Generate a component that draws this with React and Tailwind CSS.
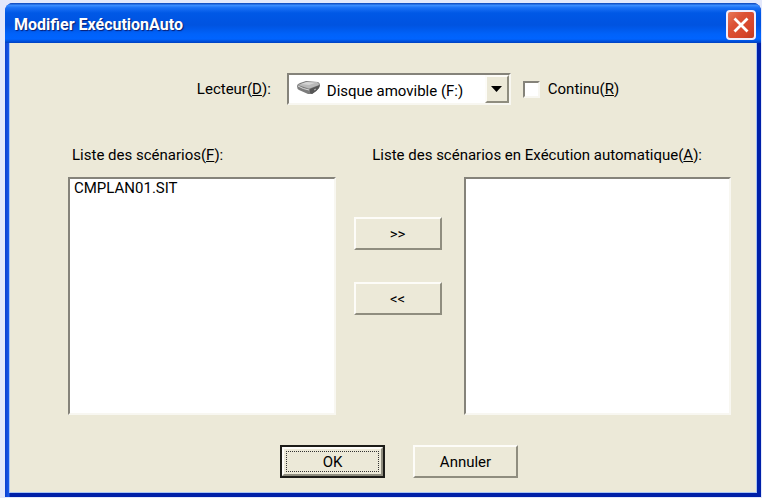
import React from 'react';

const RAISED = "border-2 border-t-[#fdfcf8] border-l-[#fdfcf8] border-r-[#8f8d7f] border-b-[#8f8d7f] bg-[#ece9d8]";
const SUNKEN = "border-2 border-t-[#85837a] border-l-[#85837a] border-r-[#f8f7f1] border-b-[#f8f7f1] bg-white";

const DiskIcon = () => (
  <svg className="absolute left-2 top-1.5 w-6 h-4 pointer-events-none" viewBox="0 0 24 16">
    <path d="M0 5 Q0 3 3 2 L9 0 L21 1 Q23 2 23 4 L22 7 Q20 10 15 13 L11 13 L2 9 Q0 8 0 5 Z" fill="#7c7c7c" />
    <path d="M1 4 L9 1 L20 1 Q22 2 22 4 L14 7 Q12 8 10 7 Z" fill="#b9b9b9" />
    <path d="M4 3 L10 1 L18 2 L12 4 Z" fill="#d4d4d4" />
    <path d="M13 8 L23 4 L22 7 Q20 10 15 13 L13 12 Z" fill="#565656" />
    <path d="M1 5 Q6 8 12 9" stroke="#dadada" strokeWidth="1" fill="none" />
    <path d="M17 9 L19 8" stroke="#b8b8b8" strokeWidth="1" />
  </svg>
);

const TitleBar = () => (
  <div className="h-10 flex items-center justify-between pl-[9px] pr-[5px] bg-[linear-gradient(to_bottom,#0842b8_0%,#3a8cff_6%,#1a70f5_12%,#0058e6_25%,#0053e0_55%,#0062fa_78%,#0064ff_90%,#0040c0_100%)]">
    <h1 className="pt-1 text-white text-base font-bold font-['Roboto',sans-serif] [text-shadow:1px_1px_1px_#0a1e70]">
      Modifier ExécutionAuto
    </h1>
    <button
      type="button"
      aria-label="Fermer"
      className="w-[30px] h-[30px] mt-1 flex items-center justify-center rounded border-2 border-[#f2eefb] bg-[linear-gradient(135deg,#e8795a_0%,#dc5236_35%,#d6442a_75%,#c03c20_100%)]"
    >
      <svg className="w-4 h-4" viewBox="0 0 16 16">
        <path d="M1.5 1.5 L14.5 14.5 M14.5 1.5 L1.5 14.5" stroke="#fff" strokeWidth="2.8" />
      </svg>
    </button>
  </div>
);

const App = () => {
  return (
    <div className="min-h-screen flex flex-col pt-[3px] pl-[5px] pr-px pb-px bg-[#e3e8fb] text-black text-[15px] leading-5 font-['Roboto',sans-serif]">
      <div className="flex-1 flex flex-col rounded-t-lg overflow-hidden bg-[#0831d9] bg-[linear-gradient(to_right,#0a3fd0,#1a5ae8_4px,#0020a8_5px)]">
        <TitleBar />
        <form className="flex-1 flex flex-col ml-1 mr-1 mb-1 border border-t-0 border-[#a8c4f5] bg-[#ece9d8]">
          <div className="flex items-center justify-center pl-[50px] pt-[30px]">
            <label htmlFor="drive" className="mr-4">Lecteur(<u>D</u>):</label>
            <div className={`relative w-56 h-8 ${SUNKEN}`}>
              <DiskIcon />
              <select id="drive" className="w-full h-full appearance-none bg-transparent pl-[38px] pt-1 outline-none">
                <option>Disque amovible (F:)</option>
              </select>
              <span className={`absolute right-0 inset-y-0 w-6 flex items-center justify-center pointer-events-none ${RAISED}`}>
                <svg className="w-[11px] h-[6px]" viewBox="0 0 11 6">
                  <path d="M0 0 H11 L5.5 6 Z" fill="#000" />
                </svg>
              </span>
            </div>
            <label className="flex items-center gap-2 ml-3">
              <input type="checkbox" className={`appearance-none w-[17px] h-[17px] ${SUNKEN}`} />
              <span>Continu(<u>R</u>)</span>
            </label>
          </div>

          <div className="flex justify-between pl-[62px] pr-[54px] pt-10">
            <label htmlFor="scenarios">Liste des scénarios(<u>F</u>):</label>
            <label htmlFor="autorun">Liste des scénarios en Exécution automatique(<u>A</u>):</label>
          </div>

          <div className="grid grid-cols-[1fr_92px_1fr] gap-x-[18px] pl-[58px] pr-[25px] pt-3">
            <select id="scenarios" size={12} className={`h-[238px] appearance-none outline-none overflow-hidden ${SUNKEN}`}>
              <option className="px-1 py-0">CMPLAN01.SIT</option>
            </select>
            <div className="flex flex-col gap-8 pt-10 pr-1">
              <button type="button" className={`h-[33px] ${RAISED}`}>&gt;&gt;</button>
              <button type="button" className={`h-[33px] ${RAISED}`}>&lt;&lt;</button>
            </div>
            <select id="autorun" size={12} className={`h-[238px] appearance-none outline-none overflow-hidden ${SUNKEN}`} />
          </div>

          <div className="flex justify-center gap-7 pl-8 pt-[30px]">
            <button type="submit" className="w-[105px] h-[33px] border-2 border-[#1c1c18]">
              <span className={`flex h-full p-[2px] ${RAISED}`}>
                <span className="flex-1 flex items-center justify-center border border-dotted border-[#333]">OK</span>
              </span>
            </button>
            <button type="button" className={`w-[105px] h-[33px] ${RAISED}`}>Annuler</button>
          </div>
        </form>
      </div>
    </div>
  );
};

export default App;
